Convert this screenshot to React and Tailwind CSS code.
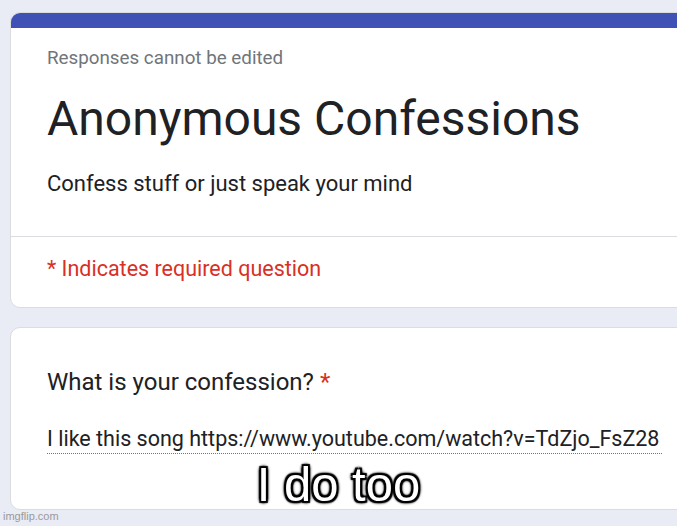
export default function App() {
  return (
    <div
      className="relative w-[677px] h-[526px] overflow-hidden bg-[#e9ebf5]"
      style={{ fontFamily: "Roboto, 'Noto Sans', sans-serif" }}
    >
      <div className="flex flex-col gap-[19px] pl-[10px] pt-[12px] w-[720px]">
        <div className="rounded-[10px] bg-white border border-[#dadce0] overflow-hidden">
          <div className="h-[15px] bg-[#3f51b5]" />
          <div className="pl-[36px] pt-[18px] pb-[38px]">
            <div className="text-[18.8px] text-[#70757a] leading-[24px]">Responses cannot be edited</div>
            <div className="mt-[21px] text-[48px] leading-[56px] text-[#202124]">Anonymous Confessions</div>
            <div className="mt-[23px] text-[22px] leading-[28px] text-[#202124]">Confess stuff or just speak your mind</div>
          </div>
          <div className="border-t border-[#dadce0] pl-[36px] pt-[18px] pb-[24px]">
            <div className="text-[21.5px] leading-[28px] text-[#d93025]">* Indicates required question</div>
          </div>
        </div>
        <div className="rounded-[10px] bg-white border border-[#dadce0] h-[183px] pl-[36px] pt-[40px]">
          <div className="text-[24px] leading-[28px] text-[#202124]">
            What is your confession? <span className="text-[#d93025]">*</span>
          </div>
          <div className="mt-[29px] w-[615px] border-b border-dotted border-[#70757a] text-[21.5px] leading-[28px] text-[#202124] whitespace-nowrap">
            I like this song https://www.youtube.com/watch?v=TdZjo_FsZ28
          </div>
        </div>
      </div>
      <div
        className="absolute left-0 right-0 top-[458px] text-center text-white text-[49px] leading-[52px]"
        style={{
          fontFamily: "'Liberation Sans', Arial, sans-serif",
          textShadow:
            "2px 2px 1px #000, -2px -2px 1px #000, 2px -2px 1px #000, -2px 2px 1px #000, 0 2px 3px #000, 0 -2px 3px #000, 2px 0 3px #000, -2px 0 3px #000",
        }}
      >
        I do too
      </div>
      <div
        className="absolute left-[3px] bottom-[2px] text-[11px] text-[#9a9a9a]"
        style={{ fontFamily: "'Liberation Sans', Arial, sans-serif" }}
      >
        imgflip.com
      </div>
    </div>
  );
}
